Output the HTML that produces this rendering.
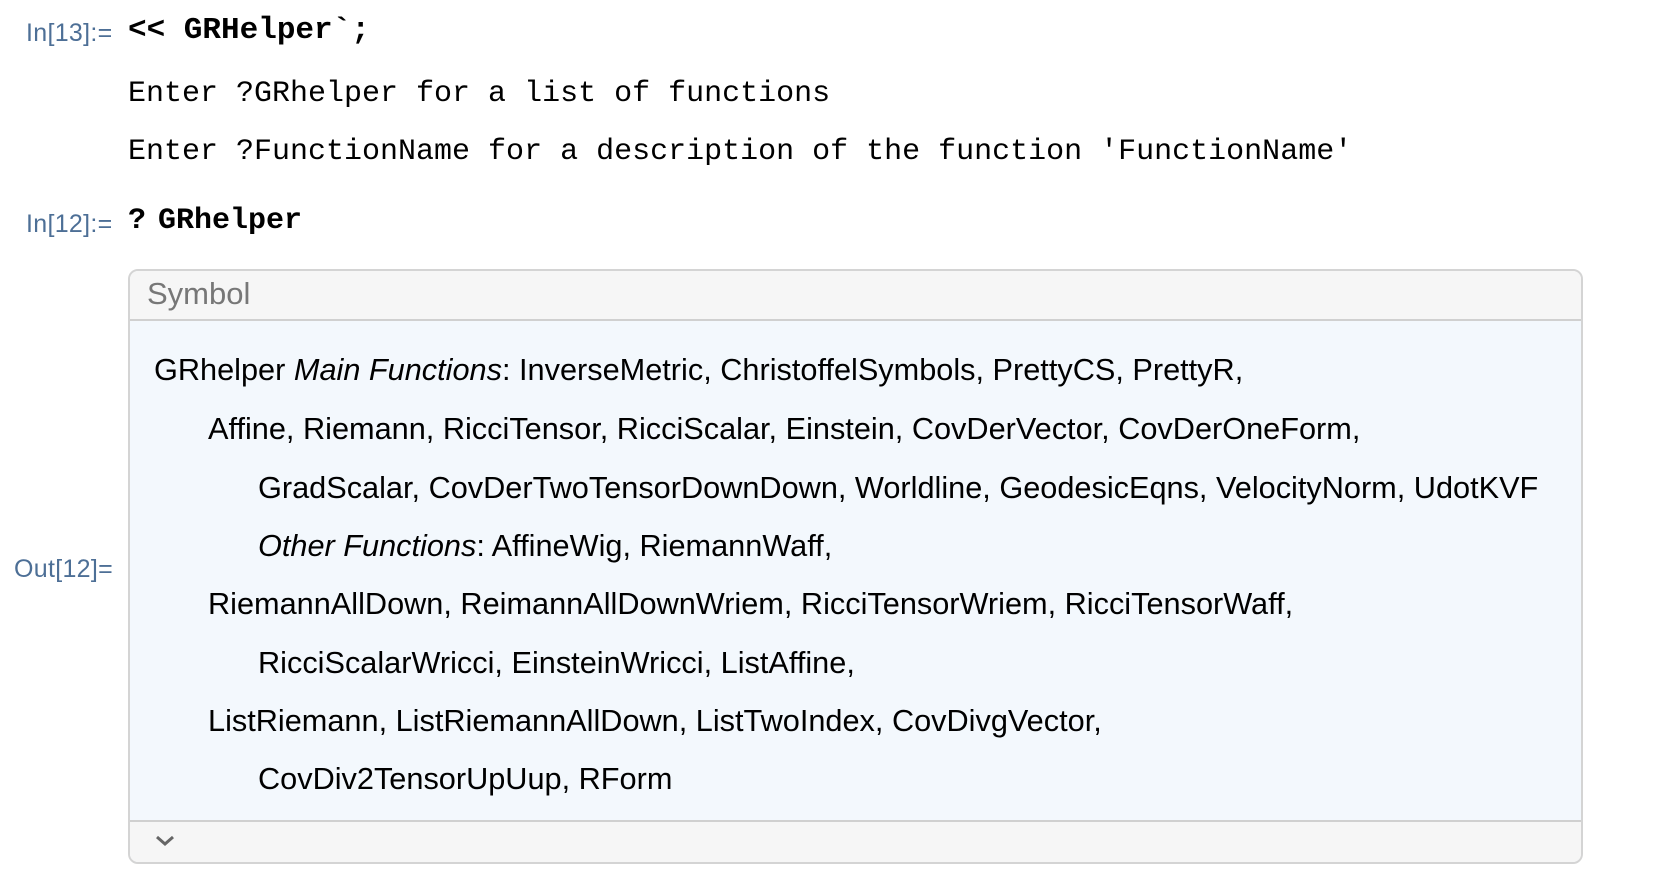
<!DOCTYPE html>
<html><head><meta charset="utf-8"><style>
body{margin:0;width:1664px;height:892px;background:#fff;position:relative;overflow:hidden;font-family:"Liberation Sans",sans-serif;}
.a{position:absolute;white-space:nowrap;}
.lbl{color:#4d6f96;font-size:25px;font-family:"Liberation Sans",sans-serif;letter-spacing:0.3px;}
.mono{font-family:"Liberation Mono",monospace;font-size:30px;color:#000;}
.b{font-weight:bold;}
.box{position:absolute;left:128px;top:269px;width:1451px;height:591px;border:2px solid #d4d4d4;border-radius:10px;background:#f3f8fd;overflow:hidden;}
.hdr{position:absolute;left:0;top:0;right:0;height:48px;background:#f6f6f6;border-bottom:2px solid #d0d0d0;}
.ftr{position:absolute;left:0;bottom:0;right:0;height:40px;background:#f6f6f6;border-top:2px solid #d0d0d0;}
.t{position:absolute;font-size:30.7px;color:#000;white-space:nowrap;line-height:36px;}
</style></head><body>
<div class="a lbl" style="left:26px;top:19px;">In[13]:=</div>
<div class="a mono b" style="left:128px;top:13px;font-size:31px;">&lt;&lt; GRHelper`;</div>
<div class="a mono" style="left:128px;top:77px;">Enter ?GRhelper for a list of functions</div>
<div class="a mono" style="left:128px;top:135px;">Enter ?FunctionName for a description of the function 'FunctionName'</div>
<div class="a lbl" style="left:26px;top:210px;">In[12]:=</div>
<div class="a mono b" style="left:128px;top:204px;">?<span style="margin-left:-6px"> GRhelper</span></div>
<div class="a lbl" style="left:14px;top:555px;">Out[12]=</div>
<div class="box">
<div class="hdr"><div class="t" style="left:17px;top:5px;color:#777;font-size:31px;">Symbol</div></div>
<div class="t" style="left:24px;top:81px;">GRhelper <i>Main Functions</i>: InverseMetric, ChristoffelSymbols, PrettyCS, PrettyR,</div>
<div class="t" style="left:78px;top:140px;">Affine, Riemann, RicciTensor, RicciScalar, Einstein, CovDerVector, CovDerOneForm,</div>
<div class="t" style="left:128px;top:199px;">GradScalar, CovDerTwoTensorDownDown, Worldline, GeodesicEqns, VelocityNorm, UdotKVF</div>
<div class="t" style="left:128px;top:257px;"><i>Other Functions</i>: AffineWig, RiemannWaff,</div>
<div class="t" style="left:78px;top:315px;">RiemannAllDown, ReimannAllDownWriem, RicciTensorWriem, RicciTensorWaff,</div>
<div class="t" style="left:128px;top:374px;">RicciScalarWricci, EinsteinWricci, ListAffine,</div>
<div class="t" style="left:78px;top:432px;">ListRiemann, ListRiemannAllDown, ListTwoIndex, CovDivgVector,</div>
<div class="t" style="left:128px;top:490px;">CovDiv2TensorUpUup, RForm</div>
<div class="ftr"><svg style="position:absolute;left:24px;top:12px" width="22" height="14" viewBox="0 0 22 14"><path d="M3 3 L11 10 L19 3" fill="none" stroke="#666" stroke-width="3"/></svg></div>
</div>
</body></html>
